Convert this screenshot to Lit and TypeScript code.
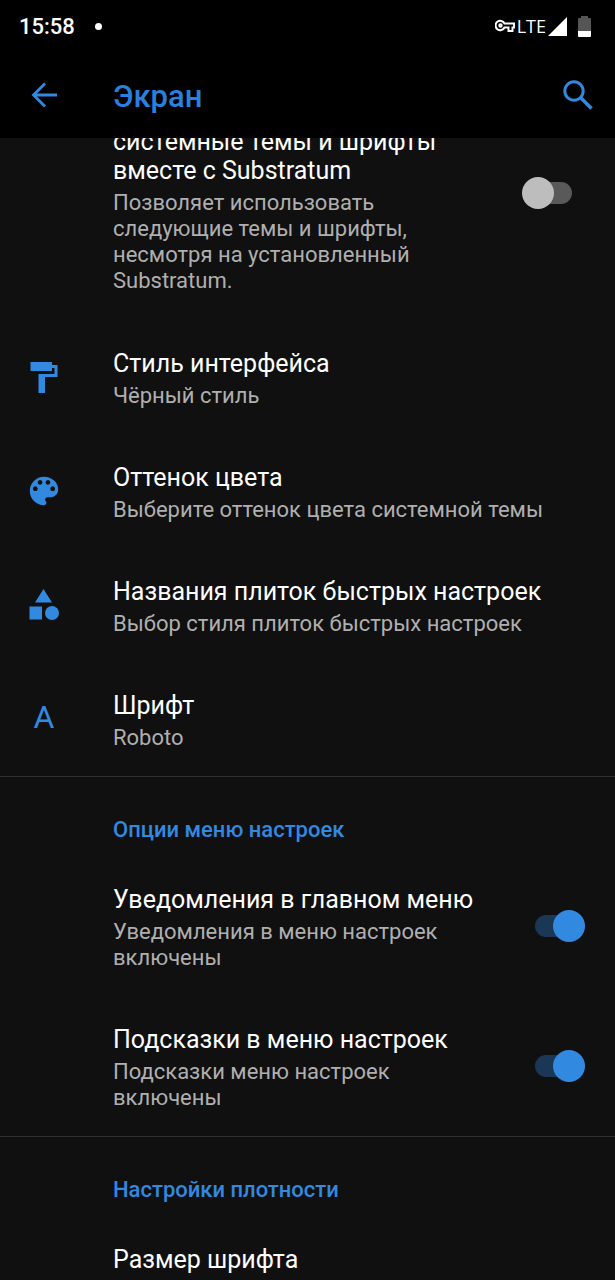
import { LitElement, html, css, svg, nothing } from "lit";
import { customElement, property } from "lit/decorators.js";

const icons = {
  roller: svg`<path d="M1.500 1h21.500v3h5.500v12h-12.500v16h-6.500v-19h16v-6h-2.500v3h-21.500z"/>`,
  palette: svg`<path fill-rule="evenodd" d="M12 3c-4.970 0-9 4.030-9 9s4.030 9 9 9c.83 0 1.500-.67 1.500-1.500 0-.39-.15-.74-.39-1.010-.23-.26-.38-.61-.38-.99 0-.83.67-1.500 1.500-1.500H16c2.760 0 5-2.240 5-5 0-4.420-4.030-8-9-8zm-5.500 9c-.83 0-1.500-.67-1.500-1.500S5.670 9 6.500 9 8 9.670 8 10.500 7.330 12 6.500 12zm3-4C8.670 8 8 7.330 8 6.500S8.670 5 9.500 5s1.500.67 1.500 1.500S10.330 8 9.500 8zm5 0c-.83 0-1.500-.67-1.500-1.500S13.670 5 14.500 5s1.500.67 1.500 1.500S15.330 8 14.500 8zm3 4c-.83 0-1.500-.67-1.500-1.500S16.670 9 17.500 9s1.500.67 1.500 1.500-.67 1.500-1.500 1.500z"/>`,
  shapes: svg`<path d="M14.500 0l8.500 13.500H6zM.5 17.500h12.500v13H.5z"/><circle cx="23" cy="24" r="7"/>`,
};

const settings = [
  { icon: "roller", box: "0 0 30 32", title: "Стиль интерфейса", summary: "Чёрный стиль" },
  { icon: "palette", box: "2.500 2.500 19 19", title: "Оттенок цвета", summary: "Выберите оттенок цвета системной темы" },
  { icon: "shapes", box: "0 0 30 32", title: "Названия плиток быстрых настроек", summary: "Выбор стиля плиток быстрых настроек" },
  { icon: "letter", box: "", title: "Шрифт", summary: "Roboto" },
];

@customElement("setting-row")
class SettingRow extends LitElement {
  @property() heading = "";
  @property() summary = "";
  @property({ type: Boolean }) toggle = false;
  @property({ type: Boolean }) on = false;

  static styles = css`
    :host { display: block; }
    .row {
      display: grid;
      grid-template-columns: 88px 1fr auto;
      align-items: center;
      box-sizing: border-box;
      width: 100%;
      padding: 29px 30px var(--row-bottom, 25px) 0;
      color: inherit;
      text-decoration: none;
    }
    .icon { display: flex; justify-content: center; padding-bottom: 4px; }
    .copy {
      display: flex;
      flex-direction: column;
      gap: 5px;
      padding: var(--copy-top, 0) 0 0 25px;
      min-width: 0;
    }
    .wide { grid-column: 2 / 4; }
    .title { color: #fff; font-size: 25px; line-height: 29px; }
    .summary { color: #afafaf; font-size: 22px; line-height: 26px; }
    .switch {
      appearance: none;
      display: flex;
      align-items: center;
      width: 63px;
      height: 32px;
      margin: 0 0 4px 32px;
      position: relative;
    }
    .switch::before {
      content: "";
      width: 37px;
      height: 22px;
      margin: 0 auto;
      border-radius: 11px;
      background: #595959;
    }
    .switch::after {
      content: "";
      position: absolute;
      left: 0;
      width: 32px;
      height: 32px;
      border-radius: 50%;
      background: #bdbdbd;
    }
    .switch:checked::before { background: #1a3755; }
    .switch:checked::after { left: auto; right: 0; background: #3289e0; }
  `;

  render() {
    const copy = html`
      <span class="title">${this.heading}</span>
      ${this.summary ? html`<span class="summary">${this.summary}</span>` : nothing}`;
    return this.toggle
      ? html`<label class="row"><span></span><span class="copy">${copy}</span>
          <input class="switch" type="checkbox" role="switch" .checked=${this.on} /></label>`
      : html`<a class="row" href="#"><span class="icon"><slot></slot></span><span class="copy wide">${copy}</span></a>`;
  }
}

@customElement("app-root")
class AppRoot extends LitElement {
  static styles = css`
    :host {
      display: flex;
      flex-direction: column;
      height: 100vh;
      overflow: hidden;
      background: #101010;
      font-family: Roboto, sans-serif;
    }
    .top { background: #000; position: relative; z-index: 1; flex: none; }
    .status {
      display: flex;
      align-items: center;
      height: 52px;
      padding: 0 24px 0 19px;
      color: #fff;
    }
    .clock { font-size: 22px; font-weight: 500; }
    .dot { width: 7px; height: 7px; border-radius: 50%; background: #fff; margin-left: 20px; }
    .signals { display: flex; align-items: center; margin-left: auto; }
    .lte { font-family: "Open Sans", sans-serif; font-size: 18px; margin: 0 2px; }
    .battery { margin-left: 11px; }
    .bar {
      display: grid;
      grid-template-columns: 88px 1fr auto;
      align-items: center;
      height: 86px;
      padding-right: 22px;
      color: #2a80dd;
    }
    .bar button {
      display: flex;
      justify-content: center;
      border: 0;
      padding: 0;
      background: none;
      color: #3289e0;
    }
    h1 { margin: 0; padding: 4px 0 0 25px; font-size: 31px; line-height: 36px; font-weight: 500; }
    .list { flex: 1; min-height: 0; }
    .list svg { fill: #3289e0; display: block; }
    .scrolled { margin-top: -71px; --copy-top: 31px; --row-bottom: 26px; }
    .letter { color: #3289e0; font-size: 32px; line-height: 32px; padding-bottom: 4px; }
    h2 {
      margin: 0;
      border-top: 1px solid #303030;
      padding: 40px 0 13px 113px;
      color: #3289e0;
      font-size: 22px;
      line-height: 26px;
      font-weight: 500;
    }
  `;

  render() {
    return html`
      <header class="top">
        <div class="status">
          <span class="clock">15:58</span><span class="dot"></span>
          <div class="signals">
            <svg width="20" height="14" viewBox="0 0 20 14" fill="none" stroke="#fff" stroke-width="2">
              <path d="M9.500 4.500h9.500v4h-1.500v3.500h-4v-3.500h-4a4.700 4.700 0 1 1 0-4z"/>
              <circle cx="5.500" cy="6.500" r="1.200"/>
            </svg>
            <span class="lte">LTE</span>
            <svg width="19" height="19" viewBox="0 0 19 19" fill="#fff"><path d="M19 0v19H0z"/></svg>
            <svg class="battery" width="13" height="21" viewBox="0 0 13 21">
              <path fill="#555" d="M0 3q0-1 1-1h2V0h7v2h2q1 0 1 1v12H0z"/><path fill="#fff" d="M0 15h13v5q0 1-1 1H1q-1 0-1-1z"/>
            </svg>
          </div>
        </div>
        <div class="bar">
          <button aria-label="Назад">
            <svg width="26" height="26" viewBox="0 0 26 26" fill="none" stroke="currentColor" stroke-width="2.800"><path d="M14 1.500L2.500 13 14 24.500M2.500 13H26"/></svg>
          </button>
          <h1>Экран</h1>
          <button aria-label="Поиск">
            <svg width="30" height="30" viewBox="0 0 30 30" fill="none" stroke="currentColor" stroke-width="3"><circle cx="11" cy="11" r="9.200"/><path d="M17.500 17.500L28.500 28.500" stroke-width="3.600"/></svg>
          </button>
        </div>
      </header>
      <main class="list">
        <setting-row class="scrolled" toggle
          heading="системные темы и шрифты вместе с Substratum"
          summary="Позволяет использовать следующие темы и шрифты, несмотря на установленный Substratum."></setting-row>
        ${settings.map((s) => html`
          <setting-row heading=${s.title} summary=${s.summary}>
            ${s.icon === "letter"
              ? html`<span class="letter">A</span>`
              : html`<svg width="30" height="32" viewBox=${s.box}>${icons[s.icon as keyof typeof icons]}</svg>`}
          </setting-row>`)}
        <h2>Опции меню настроек</h2>
        <setting-row toggle on heading="Уведомления в главном меню" summary="Уведомления в меню настроек включены"></setting-row>
        <setting-row toggle on heading="Подсказки в меню настроек" summary="Подсказки меню настроек включены"></setting-row>
        <h2>Настройки плотности</h2>
        <setting-row heading="Размер шрифта"></setting-row>
      </main>`;
  }
}
